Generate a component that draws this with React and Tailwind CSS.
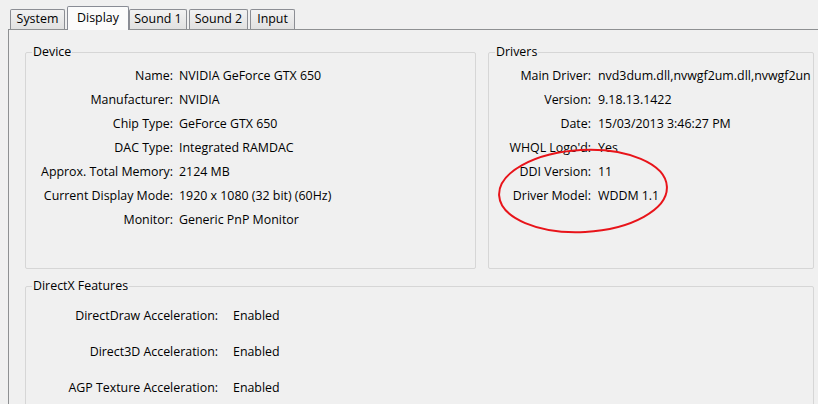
import React from 'react';

const tabs = [
  { label: "System", w: "w-[55px]" },
  { label: "Display", w: "w-[62px]", active: true },
  { label: "Sound 1", w: "w-[58px]" },
  { label: "Sound 2", w: "w-[59px]" },
  { label: "Input", w: "w-[45px]" },
];

const device = [
  ["Name:", "NVIDIA GeForce GTX 650"],
  ["Manufacturer:", "NVIDIA"],
  ["Chip Type:", "GeForce GTX 650"],
  ["DAC Type:", "Integrated RAMDAC"],
  ["Approx. Total Memory:", "2124 MB"],
  ["Current Display Mode:", "1920 x 1080 (32 bit) (60Hz)"],
  ["Monitor:", "Generic PnP Monitor"],
];

const drivers = [
  ["Main Driver:", "nvd3dum.dll,nvwgf2um.dll,nvwgf2un"],
  ["Version:", "9.18.13.1422"],
  ["Date:", "15/03/2013 3:46:27 PM"],
  ["WHQL Logo'd:", "Yes"],
  ["DDI Version:", "11"],
  ["Driver Model:", "WDDM 1.1"],
];

const features = [
  ["DirectDraw Acceleration:", "Enabled"],
  ["Direct3D Acceleration:", "Enabled"],
  ["AGP Texture Acceleration:", "Enabled"],
];

const GroupBox = ({ title, className, children }) => (
  <fieldset className={`border border-[#d6d6d6] rounded-[2px] min-w-0 ${className}`}>
    <legend className="ml-[6px] px-[1px] h-[16px] leading-[16px]">{title}</legend>
    {children}
  </fieldset>
);

const Rows = ({ rows, cols, gap, rowH }) => (
  <div className={`grid pt-[4px] ${cols} ${gap}`}>
    {rows.map(([k, v]) => (
      <React.Fragment key={k}>
        <div className={`${rowH} flex items-center justify-end whitespace-nowrap`}>{k}</div>
        <div className={`${rowH} flex items-center whitespace-nowrap overflow-hidden`}>{v}</div>
      </React.Fragment>
    ))}
  </div>
);

export default function App() {
  return (
    <div className="w-[818px] h-[404px] bg-[#f0f0f0] overflow-hidden relative text-[12.4px] text-black font-['Open_Sans',sans-serif]">
      <div className="flex items-end h-[29px] pl-[10px]">
        {tabs.map((t) =>
          t.active ? (
            <div
              key={t.label}
              className={`${t.w} relative z-10 h-[24px] -mb-px bg-[#fbfbfb] border border-b-0 border-[#898c95] rounded-t-[2px] flex items-start justify-center pt-[2px]`}
            >
              {t.label}
            </div>
          ) : (
            <div
              key={t.label}
              className={`${t.w} h-[20px] mr-[2px] last:mr-0 bg-gradient-to-b from-[#f2f2f2] to-[#e1e1e1] border border-b-0 border-[#8c8e94] rounded-t-[2px] flex items-center justify-center`}
            >
              {t.label}
            </div>
          )
        )}
      </div>

      <div className="ml-[8px] h-full border-l border-t border-[#8e9092] pl-[16px] pt-[14px]">
        <div className="flex gap-[12px]">
          <GroupBox title="Device" className="w-[451px] h-[225px]">
            <Rows rows={device} cols="grid-cols-[147px_minmax(0,1fr)]" gap="gap-x-[6px]" rowH="h-[24px]" />
          </GroupBox>
          <GroupBox title="Drivers" className="w-[326px] h-[225px]">
            <Rows rows={drivers} cols="grid-cols-[102px_minmax(0,1fr)]" gap="gap-x-[7px]" rowH="h-[24px]" />
          </GroupBox>
        </div>
        <GroupBox title="DirectX Features" className="w-[789px] h-[200px] mt-[9px]">
          <Rows rows={features} cols="grid-cols-[192px_minmax(0,1fr)]" gap="gap-x-[15px]" rowH="h-[36px]" />
        </GroupBox>
      </div>

      <svg className="absolute left-[496px] top-[147px]" width="176" height="88" viewBox="0 0 176 88">
        <ellipse cx="87" cy="44" rx="84" ry="41" fill="none" stroke="#e8141a" strokeWidth="2" transform="rotate(-3 87 44)" />
      </svg>
    </div>
  );
}
